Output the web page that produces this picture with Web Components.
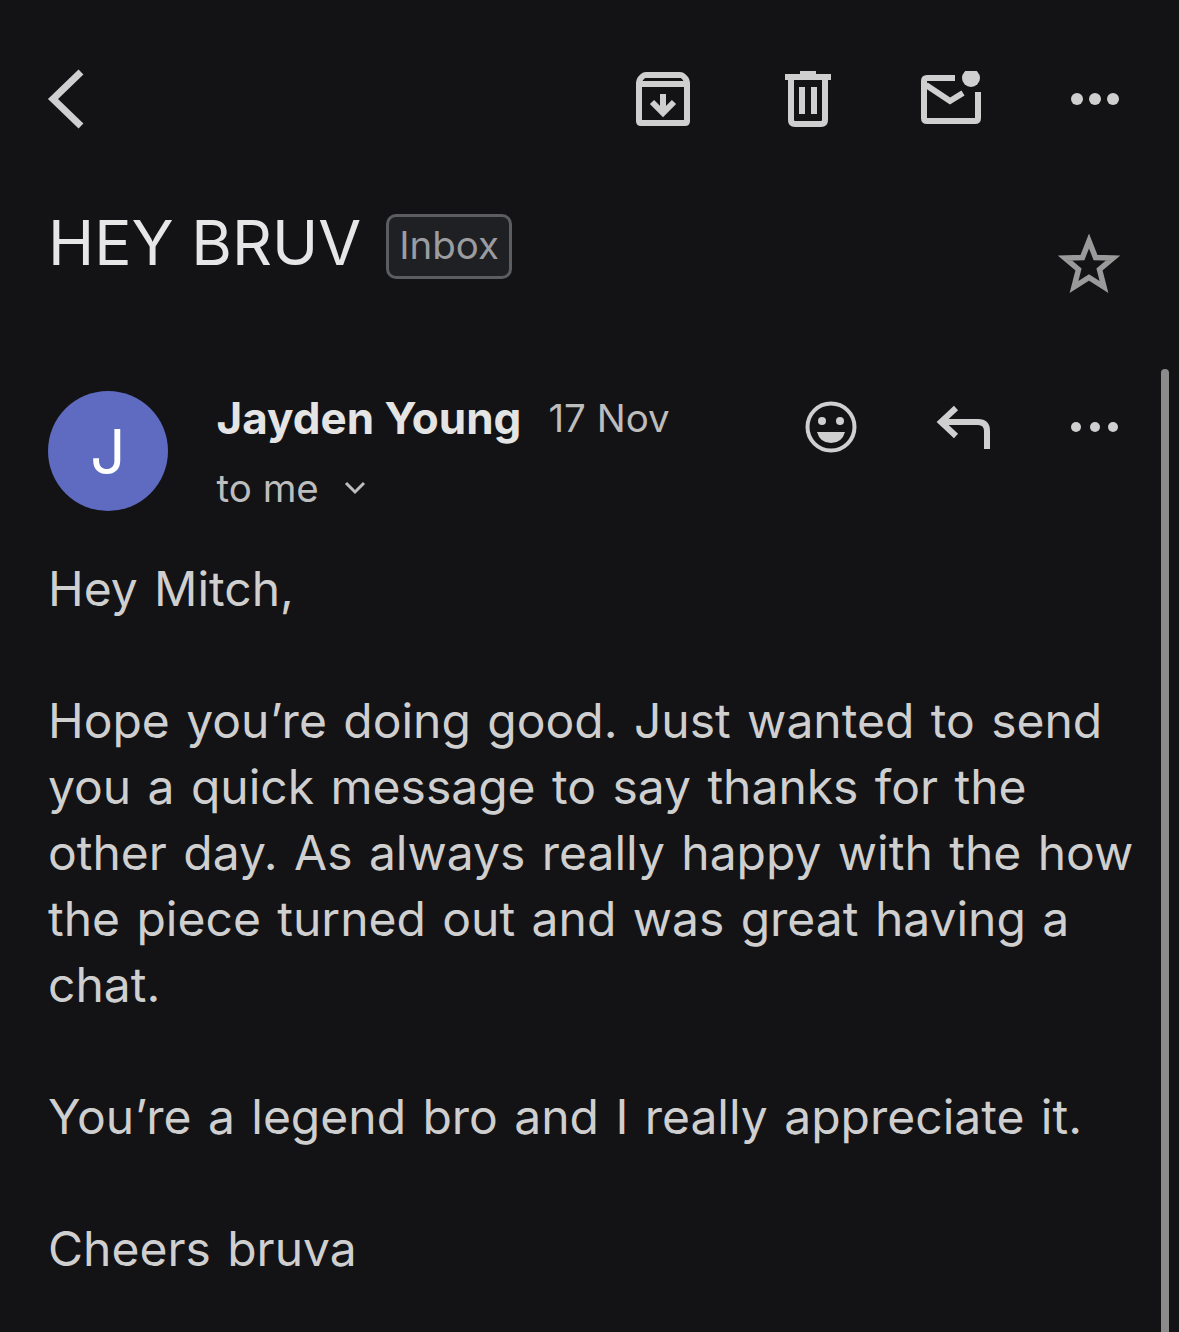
<!DOCTYPE html>
<html lang="en">
<head>
<meta charset="utf-8">
<title>HEY BRUV</title>
<style>
  html, body { margin: 0; height: 100%; background: #131316; overflow: hidden; }
</style>
</head>
<body>
<mail-screen>
  <mail-toolbar></mail-toolbar>
  <mail-subject label="Inbox">HEY BRUV</mail-subject>
  <mail-sender name="Jayden Young" date="17 Nov" to="to me" initial="J"></mail-sender>
  <mail-body>
    <p>Hey Mitch,</p>
    <p>Hope you’re doing good. Just wanted to send<br>you a quick message to say thanks for the<br>other day. As always really happy with the how<br>the piece turned out and was great having a<br>chat.</p>
    <p>You’re a legend bro and I really appreciate it.</p>
    <p>Cheers bruva</p>
  </mail-body>
</mail-screen>

<script>
class MailScreen extends HTMLElement {
  constructor() {
    super();
    this.attachShadow({ mode: 'open' });
    this.shadowRoot.innerHTML = `
      <style>
        :host {
          display: block;
          position: relative;
          width: 1179px;
          height: 1332px;
          overflow: hidden;
          background: #131316;
          font-family: Inter, Roboto, "Liberation Sans", sans-serif;
        }
        .thumb {
          position: absolute;
          left: 1161px;
          top: 369px;
          width: 8px;
          height: 980px;
          border-radius: 4px;
          background: #8b8b8c;
        }
      </style>
      <slot></slot>
      <div class="thumb"></div>
    `;
  }
}

class MailToolbar extends HTMLElement {
  constructor() {
    super();
    this.attachShadow({ mode: 'open' });
    this.shadowRoot.innerHTML = `
      <style>
        :host {
          display: flex;
          align-items: center;
          justify-content: space-between;
          height: 62px;
          padding: 68px 60px 0 47px;
          color: #cfcfcf;
        }
        svg { display: block; }
        .actions { display: flex; align-items: center; }
        .archive { margin-right: 95px; }
        .trash { margin-right: 90px; }
        .unread { margin-right: 90px; }
      </style>
      <svg width="38" height="62" viewBox="0 0 38 62" fill="none" stroke="currentColor" stroke-width="7">
        <path d="M34 4 L6 31 L34 58"/>
      </svg>
      <div class="actions">
        <svg class="archive" width="54" height="56" viewBox="0 0 54 56" fill="none" stroke="currentColor" stroke-width="6">
          <path d="M3 13 L3 50 Q3 52 5 52 L49 52 Q51 52 51 50 L51 13 Q51 9 49 7 L47 5 Q46 4 44 4 L10 4 Q8 4 7 5 L5 7 Q3 9 3 13 Z"/>
          <path d="M4 13 L50 13"/>
          <path d="M27 23 L27 40"/>
          <path d="M16 31 L27 42 L38 31"/>
        </svg>
        <svg class="trash" width="46" height="56" viewBox="0 0 46 56" fill="none" stroke="currentColor" stroke-width="6">
          <path d="M0 6 L46 6"/>
          <path d="M15 2 L31 2" stroke-width="5"/>
          <path d="M6 7 L6 49 Q6 53 10 53 L36 53 Q40 53 40 49 L40 7"/>
          <path d="M17 16 L17 43 M29 16 L29 43"/>
        </svg>
        <svg class="unread" width="60" height="56" viewBox="0 0 60 56" fill="none" stroke="currentColor" stroke-width="6">
          <path d="M34 7 L6 7 Q3 7 3 10 L3 47 Q3 50 6 50 L54 50 Q57 50 57 47 L57 21"/>
          <path d="M5 14 L29 30 L42 22"/>
          <circle cx="50" cy="7" r="9" fill="currentColor" stroke="none"/>
        </svg>
        <svg width="48" height="14" viewBox="0 0 48 14" fill="currentColor">
          <circle cx="6" cy="7" r="6"/><circle cx="24" cy="7" r="6"/><circle cx="42" cy="7" r="6"/>
        </svg>
      </div>
    `;
  }
}

class MailSubject extends HTMLElement {
  constructor() {
    super();
    this.attachShadow({ mode: 'open' });
    this.shadowRoot.innerHTML = `
      <style>
        :host {
          display: flex;
          align-items: flex-start;
          padding: 71px 59px 0 48px;
        }
        .title {
          font-size: 62.2px;
          line-height: 84px;
          font-weight: 400;
          color: #e6e6e6;
          white-space: nowrap;
        }
        .chip {
          box-sizing: border-box;
          height: 65px;
          margin: 13px 0 0 25px;
          padding: 0 10px;
          border: 3px solid #5c5d60;
          border-radius: 10px;
          background: #1f2024;
          color: #9b9ca0;
          font-size: 38.5px;
          line-height: 57px;
          white-space: nowrap;
        }
        svg { margin: 33px 0 0 auto; display: block; }
      </style>
      <div class="title"><slot></slot></div>
      <div class="chip"></div>
      <svg width="62" height="60" viewBox="0 0 62 60" fill="none" stroke="#9a9a9a" stroke-width="5.5" stroke-linejoin="miter">
        <path d="M31 7 L37.5 23.5 L55 24 L41.5 35.5 L46 53 L31 43.5 L16 53 L20.5 35.5 L7 24 L24.5 23.5 Z"/>
      </svg>
    `;
    this.shadowRoot.querySelector('.chip').textContent = this.getAttribute('label');
  }
}

class MailSender extends HTMLElement {
  constructor() {
    super();
    this.attachShadow({ mode: 'open' });
    this.shadowRoot.innerHTML = `
      <style>
        :host {
          display: flex;
          align-items: flex-start;
          padding: 97px 60px 0 48px;
          height: 120px;
        }
        .avatar {
          flex: none;
          width: 120px;
          height: 120px;
          border-radius: 50%;
          background: #5e6bc0;
          color: #fff;
          display: flex;
          align-items: center;
          justify-content: center;
          font-size: 62px;
          font-weight: 400;
        }
        .who { margin-left: 48.5px; flex: 1; }
        .line1 { display: flex; align-items: center; margin-top: -3px; height: 60px; }
        .name { font-size: 44px; font-weight: 700; color: #e4e4e4; line-height: 60px; white-space: nowrap; }
        .date { font-size: 38.5px; font-weight: 400; color: #bdbdbd; margin-left: 27px; white-space: nowrap; }
        .line2 { display: flex; align-items: center; margin-top: 16px; color: #bdbdbd; font-size: 38.5px; font-weight: 400; line-height: 48px; }
        .line2 svg { margin-left: 25px; display: block; }
        .actions { display: flex; align-items: center; margin-top: 10px; color: #cfcfcf; }
        svg { display: block; }
        .smile { margin-right: 79px; }
        .reply { margin-right: 81px; }
      </style>
      <div class="avatar"></div>
      <div class="who">
        <div class="line1"><span class="name"></span><span class="date"></span></div>
        <div class="line2"><span class="to"></span>
          <svg width="22" height="14" viewBox="0 0 22 14" fill="none" stroke="currentColor" stroke-width="3"><path d="M2 2 L11 11 L20 2"/></svg>
        </div>
      </div>
      <div class="actions">
        <svg class="smile" width="52" height="52" viewBox="0 0 52 52">
          <circle cx="26" cy="26" r="23.5" fill="none" stroke="currentColor" stroke-width="4"/>
          <circle cx="17" cy="20" r="4" fill="currentColor"/>
          <circle cx="35" cy="20" r="4" fill="currentColor"/>
          <path d="M12 31 L40 31 Q37 42 26 42 Q15 42 12 31 Z" fill="currentColor"/>
        </svg>
        <svg class="reply" width="54" height="44" viewBox="0 0 54 44" fill="none" stroke="currentColor" stroke-width="6">
          <path d="M20 3 L5 17 L20 31"/>
          <path d="M6 17 L42 17 Q51 17 51 26 L51 44"/>
        </svg>
        <svg width="48" height="12" viewBox="0 0 48 12" fill="currentColor">
          <circle cx="5" cy="6" r="5"/><circle cx="24" cy="6" r="5"/><circle cx="42" cy="6" r="5"/>
        </svg>
      </div>
    `;
    const r = this.shadowRoot;
    r.querySelector('.avatar').textContent = this.getAttribute('initial');
    r.querySelector('.name').textContent = this.getAttribute('name');
    r.querySelector('.date').textContent = this.getAttribute('date');
    r.querySelector('.to').textContent = this.getAttribute('to');
  }
}

class MailBody extends HTMLElement {
  constructor() {
    super();
    this.attachShadow({ mode: 'open' });
    this.shadowRoot.innerHTML = `
      <style>
        :host {
          display: block;
          padding: 45px 0 0 48px;
          font-size: 48px;
          font-weight: 400;
          line-height: 66px;
          color: #cfcfcf;
          word-spacing: 2.9px;
          white-space: nowrap;
        }
        ::slotted(p) { margin: 0 0 66px; }
      </style>
      <slot></slot>
    `;
  }
}

customElements.define('mail-screen', MailScreen);
customElements.define('mail-toolbar', MailToolbar);
customElements.define('mail-subject', MailSubject);
customElements.define('mail-sender', MailSender);
customElements.define('mail-body', MailBody);
</script>
</body>
</html>
